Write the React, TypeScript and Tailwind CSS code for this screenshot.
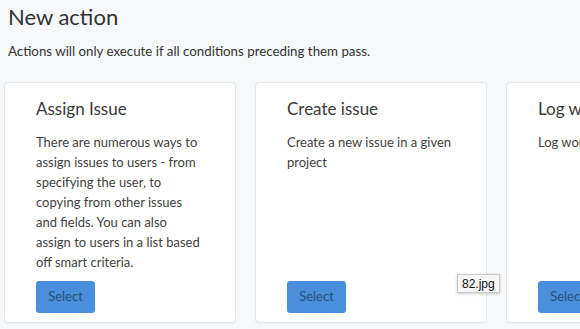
import React from "react";

interface ActionCardProps {
  title: string;
  description: string;
}

function ActionCard({ title, description }: ActionCardProps) {
  return (
    <div className="flex w-[232px] shrink-0 flex-col rounded-[4px] border border-[#e3e6ea] bg-white px-[31px] pt-[14px] pb-[9px] shadow-[0_1px_2px_rgba(0,0,0,0.04)]">
      <h2 className="text-[17px] leading-6 text-[#3a3a3a]">{title}</h2>
      <p className="mt-[11px] mb-[9px] text-[13px] leading-5 text-[#3f3f3f]">{description}</p>
      <button
        type="button"
        className="mt-auto h-8 w-[59px] rounded-[3px] bg-[#4a8fdb] text-[13px] text-[#2c4f7a]"
      >
        Select
      </button>
    </div>
  );
}

export default function App() {
  return (
    <div
      className="relative h-[329px] w-[580px] overflow-hidden bg-[#f7f8fa] pl-2"
      style={{ fontFamily: "Lato, 'Open Sans', sans-serif" }}
    >
      {/* Header */}
      <h1 className="pt-[3px] text-[22px] leading-7 text-[#333]">New action</h1>
      <p className="mt-[10px] text-[13.3px] leading-5 text-[#333]">
        Actions will only execute if all conditions preceding them pass.
      </p>

      {/* Action cards */}
      <div className="-ml-1 mt-[21px] flex gap-[19px]">
        <ActionCard
          title="Assign Issue"
          description="There are numerous ways to assign issues to users - from specifying the user, to copying from other issues and fields. You can also assign to users in a list based off smart criteria."
        />
        <ActionCard title="Create issue" description="Create a new issue in a given project" />
        <ActionCard title="Log work" description="Log work against an issue" />
      </div>

      {/* File tooltip */}
      <div
        className="absolute left-[457px] top-[274px] flex h-[19px] items-center border border-[#c9c9c9] bg-[#f6f6f6] px-[4px] text-[12px] text-[#111] shadow-[0_1px_3px_rgba(0,0,0,0.2)]"
        style={{ fontFamily: "'Liberation Sans', sans-serif" }}
      >
        82.jpg
      </div>
    </div>
  );
}
